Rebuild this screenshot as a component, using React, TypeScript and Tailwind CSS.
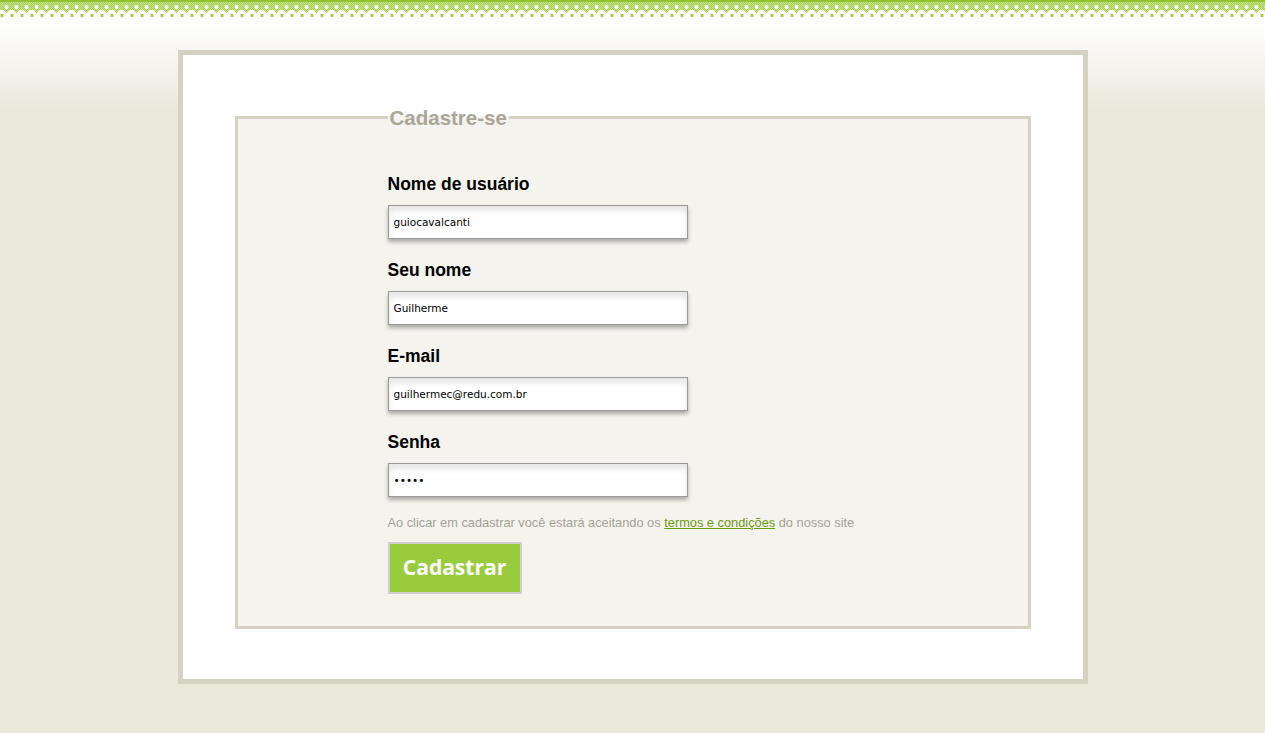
import React from "react";

type Field = {
  label: string;
  value: string;
  type?: string;
};

const fields: Field[] = [
  { label: "Nome de usuário", value: "guiocavalcanti" },
  { label: "Seu nome", value: "Guilherme" },
  { label: "E-mail", value: "guilhermec@redu.com.br" },
  { label: "Senha", value: "12345", type: "password" },
];

function TopBorder() {
  return (
    <svg className="block w-full h-[17px]" aria-hidden="true">
      <defs>
        <pattern id="checker" width="2" height="2" patternUnits="userSpaceOnUse">
          <rect width="2" height="2" fill="#c9e290" />
          <rect width="1" height="1" fill="#a6cd4e" />
          <rect x="1" y="1" width="1" height="1" fill="#a6cd4e" />
        </pattern>
        <pattern id="lace" width="10" height="17" patternUnits="userSpaceOnUse">
          <path
            d="M0 2 H10 V10 Q8.5 10 7.8 12 L6.5 13.2 L5.2 12 Q4.5 10 3 10 H0 Z"
            fill="url(#checker)"
          />
          <rect width="10" height="2" fill="#92c232" />
          <circle cx="6.5" cy="7" r="2" fill="#ffffff" />
          <rect x="0.5" y="14" width="3" height="3" fill="#a6cd4e" />
        </pattern>
      </defs>
      <rect width="100%" height="17" fill="url(#lace)" />
    </svg>
  );
}

function TextField({ label, value, type = "text" }: Field) {
  return (
    <div className="flex flex-col">
      <label className="text-[17.5px] leading-[22px] font-bold text-black">
        {label}
      </label>
      <input
        type={type}
        defaultValue={value}
        readOnly
        className="mt-[10px] w-[300px] h-[34px] bg-white border border-[#9a9a9a] px-[5px] text-[10.5px] text-black outline-none shadow-[0_3px_4px_rgba(0,0,0,0.3),inset_0_5px_6px_rgba(0,0,0,0.1)]"
        style={{ fontFamily: '"DejaVu Sans", sans-serif' }}
      />
    </div>
  );
}

export default function App() {
  return (
    <div
      className="min-h-[733px] bg-[linear-gradient(to_bottom,#ffffff_0px,#ffffff_20px,#ebe8dc_110px,#ebe8dc_100%)]"
      style={{ fontFamily: '"Liberation Sans", Arial, sans-serif' }}
    >
      <TopBorder />
      <div className="mx-auto mt-[33px] w-[910px] h-[634px] bg-white border-[5px] border-[#d5d2c3] px-[52px]">
        <fieldset className="mt-[50px] bg-[#f4f3ee] border-[3px] border-[#d5d2c3] pl-[150px] pt-[43px] pb-[32px]">
          <legend className="px-[2px] text-[20.5px] leading-[25px] font-bold text-[#a9a697]">
            Cadastre-se
          </legend>
          <div className="flex flex-col gap-[20px]">
            {fields.map((f) => (
              <TextField key={f.label} {...f} />
            ))}
          </div>
          <p className="mt-[18px] text-[12.8px] leading-[16px] text-[#a5a294]">
            Ao clicar em cadastrar você estará aceitando os{" "}
            <a href="#" className="text-[#6b9a13] underline">
              termos e condições
            </a>{" "}
            do nosso site
          </p>
          <button
            type="submit"
            className="mt-[11px] w-[134px] h-[52px] bg-[#99cc3d] border-2 border-[#cfcfcf] text-white text-[21px] font-bold"
            style={{ fontFamily: '"Open Sans", sans-serif' }}
          >
            Cadastrar
          </button>
        </fieldset>
      </div>
    </div>
  );
}
